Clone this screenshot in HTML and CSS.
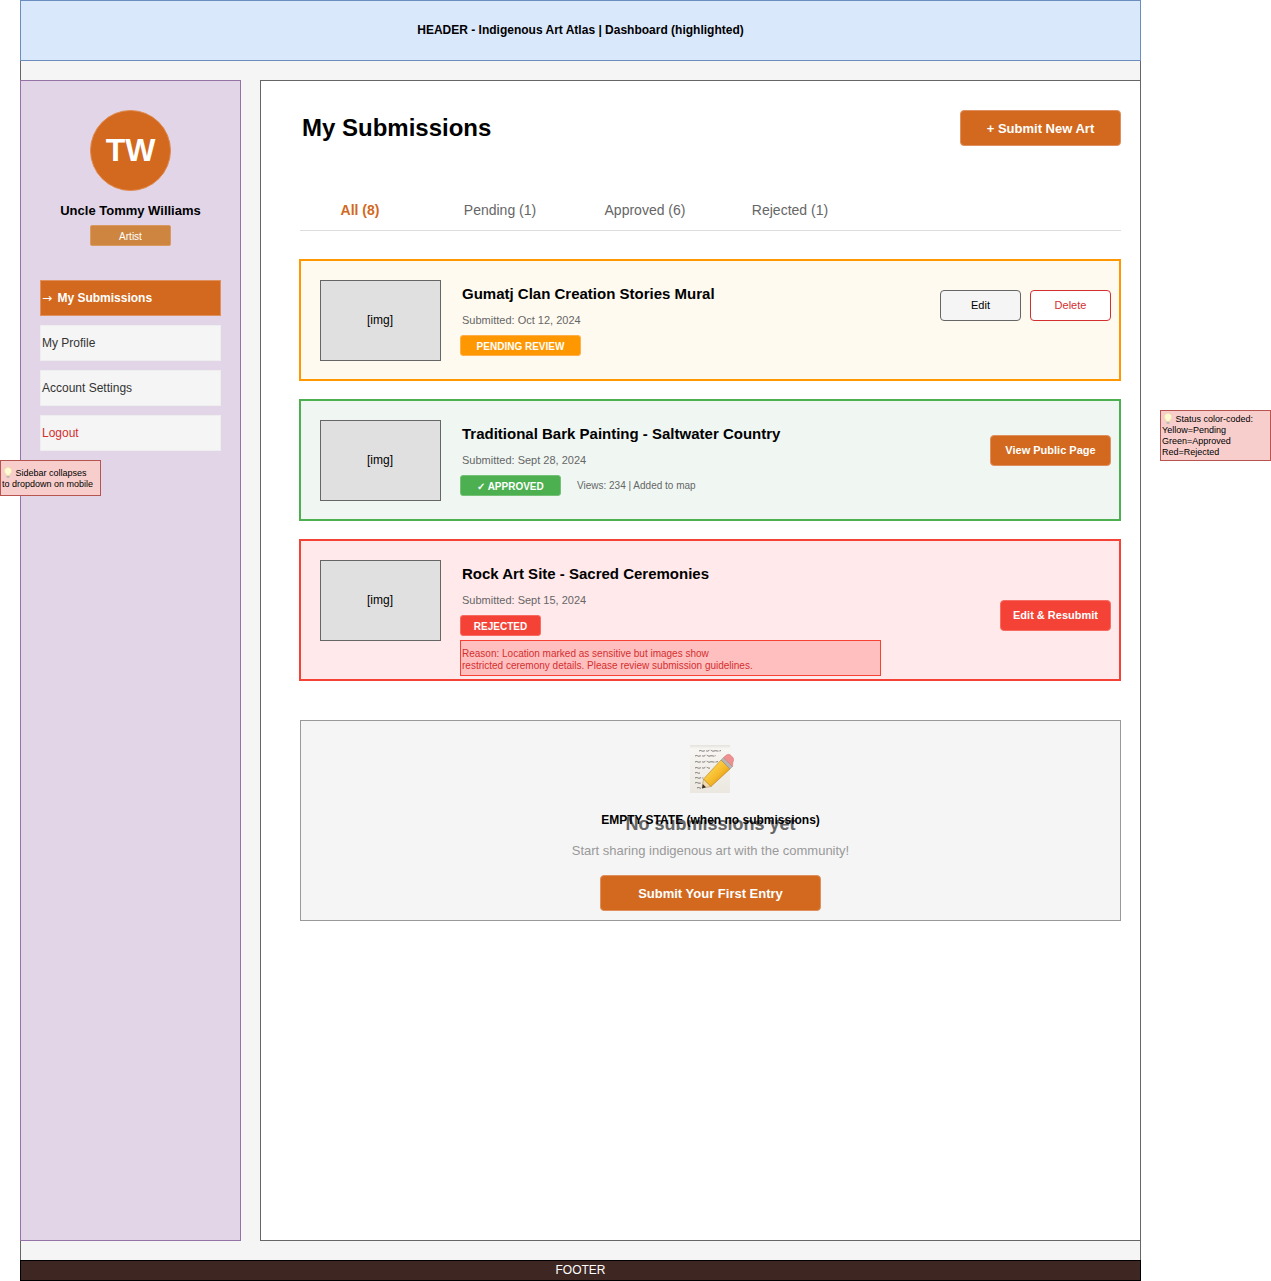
FILE: index.html
```html
<!DOCTYPE html>
<html lang="en">
<head>
    <meta charset="UTF-8">
    <meta name="viewport" content="width=device-width, initial-scale=1.0">
    <title>Indigenous Art Atlas - Dashboard</title>
    <link rel="stylesheet" href="styles.css">
</head>
<body>
    <div class="frame">
        <header class="top-header">HEADER - Indigenous Art Atlas | Dashboard (highlighted)</header>

        <div class="layout">
            <aside class="sidebar">
                <div class="avatar">TW</div>
                <div class="user-name">Uncle Tommy Williams</div>
                <div class="role-badge">Artist</div>
                <nav class="side-nav">
                    <a class="nav-item active" href="#"><span class="nav-arrow">→</span> My Submissions</a>
                    <a class="nav-item" href="#">My Profile</a>
                    <a class="nav-item" href="#">Account Settings</a>
                    <a class="nav-item logout" href="#">Logout</a>
                </nav>
            </aside>

            <main class="main-panel">
                <div class="title-row">
                    <h1>My Submissions</h1>
                    <button class="btn btn-submit">+ Submit New Art</button>
                </div>

                <div class="tabs">
                    <div class="tab tab-all">All (8)</div>
                    <div class="tab tab-pending">Pending (1)</div>
                    <div class="tab tab-approved">Approved (6)</div>
                    <div class="tab tab-rejected">Rejected (1)</div>
                </div>

                <!-- submission cards -->
                <div class="card card-pending">
                    <div class="thumb">[img]</div>
                    <div class="card-info">
                        <h2>Gumatj Clan Creation Stories Mural</h2>
                        <div class="date">Submitted: Oct 12, 2024</div>
                        <div class="status-row">
                            <span class="status status-pending">PENDING REVIEW</span>
                        </div>
                    </div>
                    <div class="actions">
                        <button class="btn btn-edit">Edit</button>
                        <button class="btn btn-delete">Delete</button>
                    </div>
                </div>

                <div class="card card-approved">
                    <div class="thumb">[img]</div>
                    <div class="card-info">
                        <h2>Traditional Bark Painting - Saltwater Country</h2>
                        <div class="date">Submitted: Sept 28, 2024</div>
                        <div class="status-row">
                            <span class="status status-approved">✓ APPROVED</span>
                            <span class="views">Views: 234 | Added to map</span>
                        </div>
                    </div>
                    <div class="actions">
                        <button class="btn btn-view">View Public Page</button>
                    </div>
                </div>

                <div class="card card-rejected">
                    <div class="thumb">[img]</div>
                    <div class="card-info">
                        <h2>Rock Art Site - Sacred Ceremonies</h2>
                        <div class="date">Submitted: Sept 15, 2024</div>
                        <div class="status-row">
                            <span class="status status-rejected">REJECTED</span>
                        </div>
                        <div class="reason">Reason: Location marked as sensitive but images show<br>restricted ceremony details. Please review submission guidelines.</div>
                    </div>
                    <div class="actions">
                        <button class="btn btn-resubmit">Edit &amp; Resubmit</button>
                    </div>
                </div>

                <div class="empty-state">
                    <svg class="memo-icon" width="44" height="48" viewBox="0 0 44 48">
                        <defs>
                            <linearGradient id="paper" x1="0" y1="0" x2="0" y2="1">
                                <stop offset="0" stop-color="#e4e1dc"/>
                                <stop offset="0.08" stop-color="#f8f6f3"/>
                                <stop offset="1" stop-color="#ebe7e0"/>
                            </linearGradient>
                            <linearGradient id="wood" x1="0" y1="0" x2="1" y2="1">
                                <stop offset="0.2" stop-color="#fcd955"/>
                                <stop offset="0.55" stop-color="#f6b92a"/>
                                <stop offset="0.85" stop-color="#d98a12"/>
                            </linearGradient>
                        </defs>
                        <rect x="0" y="0" width="40" height="48" fill="url(#paper)"/>
                        <g fill="none" stroke="#4a4743" stroke-width="0.7" stroke-dasharray="6 1.200 3.500 1.500 8 1">
                            <path d="M9 6c2-1.500 3 1 5 0s3 1 5-.5 3 1.500 5 .5 3 1 7-.5"/>
                            <path d="M5 11c2-1.500 3 1 5 0s3 1 5-.5 3 1.500 5 .5 3 1 6-.5"/>
                            <path d="M5 17c2-1.500 3 1 5 0s3 1 5-.5 3 1.500 5 .5 3 1 8-.5"/>
                            <path d="M5 23c2-1.500 3 1 5 0s3 1 5-.5 3 1.500 5 .5"/>
                            <path d="M5 28c2-1.500 3 1 5 0"/>
                            <path d="M5 33c2-1.500 3 1 5 0s2 1 3-.5"/>
                            <path d="M5 38c2-1.500 3 1 6 0"/>
                            <path d="M7 43c2-1.500 3 1 4 0"/>
                        </g>
                        <polygon points="12,43 13.500,34 21,41.500" fill="#f3d9ae" stroke="#a8803f" stroke-width="0.5"/>
                        <polygon points="12,43.500 12.800,39 16,42.300" fill="#35302b"/>
                        <polygon points="13.500,34 31,15 40,24 21,41.500" fill="url(#wood)" stroke="#a8700f" stroke-width="0.5"/>
                        <polygon points="31,15 33.500,12.500 42.500,21.500 40,24" fill="#b4b4b0" stroke="#85857f" stroke-width="0.4"/>
                        <path d="M33.500 12.500l2.500-2.200c1.500-1.300 3.500-1.300 5 .2l1.500 1.500c1.500 1.500 1.800 3.500.5 5l-.5 4.500z" fill="#ee8f90" stroke="#c96a6c" stroke-width="0.4"/>
                    </svg>
                    <div class="empty-heading">No submissions yet</div>
                    <div class="empty-label">EMPTY STATE (when no submissions)</div>
                    <div class="empty-text">Start sharing indigenous art with the community!</div>
                    <button class="btn btn-first">Submit Your First Entry</button>
                </div>
            </main>
        </div>

        <footer class="bottom-footer">FOOTER</footer>
    </div>

    <div class="note note-sidebar">
        <div><svg class="bulb" width="8" height="11" viewBox="0 0 8 11"><path d="M4 0.300a3.600 3.600 0 0 1 2 6.600L5.500 8.500h-3L2 6.900a3.600 3.600 0 0 1 2-6.600z" fill="#fffbd6" stroke="#efe39a" stroke-width="0.6"/><rect x="2.600" y="8.800" width="2.800" height="2" fill="#b9b9b3"/></svg> Sidebar collapses</div>
        <div>to dropdown on mobile</div>
    </div>
    <div class="note note-status">
        <div><svg class="bulb" width="8" height="11" viewBox="0 0 8 11"><path d="M4 0.300a3.600 3.600 0 0 1 2 6.600L5.500 8.500h-3L2 6.900a3.600 3.600 0 0 1 2-6.600z" fill="#fffbd6" stroke="#efe39a" stroke-width="0.6"/><rect x="2.600" y="8.800" width="2.800" height="2" fill="#b9b9b3"/></svg> Status color-coded:</div>
        <div>Yellow=Pending</div>
        <div>Green=Approved</div>
        <div>Red=Rejected</div>
    </div>
</body>
</html>
```

FILE: styles.css
```css
* {
    box-sizing: border-box;
}
html, body {
    margin: 0;
    padding: 0;
    background: #fff;
    overflow: hidden;
}
body {
    font-family: 'Liberation Sans', Arial, sans-serif;
    color: #000;
    height: 1281px;
    position: relative;
}
button {
    font-family: inherit;
    cursor: pointer;
}

/* outer wireframe */
.frame {
    width: 1121px;
    height: 1281px;
    margin-left: 20px;
    background: #f5f5f5;
    border-left: 1px solid #666;
    border-right: 1px solid #666;
    display: flex;
    flex-direction: column;
}
.top-header {
    height: 61px;
    margin: 0 -1px;
    padding-bottom: 2px;
    background: #dae8fc;
    border: 1px solid #6c8ebf;
    font-size: 12px;
    font-weight: bold;
    display: flex;
    align-items: center;
    justify-content: center;
}
.layout {
    display: flex;
    gap: 19px;
    margin: 19px -1px 19px -1px;
    height: 1161px;
}
.bottom-footer {
    height: 21px;
    margin: 0 -1px;
    padding-bottom: 2px;
    background: #3e2723;
    border: 1px solid #000;
    color: #fff;
    font-size: 12px;
    display: flex;
    align-items: center;
    justify-content: center;
}

/* sidebar */
.sidebar {
    width: 221px;
    flex-shrink: 0;
    background: #e1d5e7;
    border: 1px solid #9673a6;
    padding: 29px 19px 0;
    display: flex;
    flex-direction: column;
    align-items: center;
}
.avatar {
    width: 81px;
    height: 81px;
    border-radius: 50%;
    background: #d2691e;
    border: 1px solid #e08a50;
    color: #fff;
    font-size: 32px;
    font-weight: bold;
    display: flex;
    align-items: center;
    justify-content: center;
    padding-bottom: 1px;
}
.user-name {
    margin-top: 12px;
    font-size: 13px;
    font-weight: bold;
    line-height: 15px;
}
.role-badge {
    width: 81px;
    height: 21px;
    margin-top: 7px;
    padding-top: 1px;
    background: #cd853f;
    border: 1px solid #d99a62;
    border-radius: 2px;
    color: #fff;
    font-size: 10px;
    display: flex;
    align-items: center;
    justify-content: center;
}
.side-nav {
    width: 181px;
    margin-top: 34px;
    display: flex;
    flex-direction: column;
    gap: 9px;
}
.nav-item {
    height: 36px;
    padding-left: 1px;
    background: #f5f5f5;
    border: 1px solid #eee;
    color: #333;
    font-size: 12px;
    text-decoration: none;
    display: block;
    line-height: 34px;
}
.nav-item.active {
    background: #d2691e;
    border-color: #e0905f;
    color: #fff;
    font-weight: bold;
}
.nav-arrow {
    font-family: 'DejaVu Sans', sans-serif;
    font-weight: normal;
    margin-right: 2px;
}
.nav-item.logout {
    color: #d32f2f;
}

/* main */
.main-panel {
    flex: 1;
    background: #fff;
    border: 1px solid #666;
    padding: 29px 19px 0 38px;
}
.title-row {
    display: flex;
    justify-content: space-between;
    align-items: center;
    height: 36px;
}
.title-row h1 {
    margin: 0 0 0 3px;
    font-size: 24px;
    font-weight: bold;
}
.btn {
    border-radius: 4px;
    font-size: 13px;
    padding: 0;
}
.btn-submit {
    width: 161px;
    height: 36px;
    background: #d2691e;
    border: 1px solid #e0905f;
    color: #fff;
    font-weight: bold;
}

/* tabs */
.tabs {
    display: flex;
    height: 41px;
    margin: 44px 0 28px 1px;
    border-bottom: 1px solid #ddd;
    font-size: 14px;
    color: #666;
}
.tab {
    height: 40px;
    display: flex;
    align-items: center;
    justify-content: center;
}
.tab-all {
    width: 120px;
    color: #d2691e;
    font-weight: bold;
}
.tab-pending, .tab-rejected {
    width: 160px;
}
.tab-approved {
    width: 130px;
}

/* submission cards */
.card {
    height: 122px;
    margin-bottom: 18px;
    padding: 19px 8px 0 19px;
    border: 2px solid;
    display: flex;
    align-items: flex-start;
}
.card-pending {
    background: #fffaf0;
    border-color: #ff9800;
}
.card-approved {
    background: #f0f7f3;
    border-color: #4caf50;
}
.card-rejected {
    height: 142px;
    margin-bottom: 39px;
    background: #ffe9eb;
    border-color: #f44336;
}
.thumb {
    width: 121px;
    height: 81px;
    flex-shrink: 0;
    padding: 0 1px 1px 0;
    background: #e0e0e0;
    border: 1px solid #666;
    font-size: 12px;
    display: flex;
    align-items: center;
    justify-content: center;
}
.card-info {
    flex: 1;
    margin-left: 19px;
}
.card-info h2 {
    margin: 5px 0 0 2px;
    font-size: 15px;
    line-height: 18px;
    font-weight: bold;
}
.date {
    margin: 11px 0 0 2px;
    font-size: 11px;
    line-height: 13px;
    color: #666;
}
.status-row {
    margin-top: 8px;
    display: flex;
    align-items: center;
}
.status {
    height: 21px;
    padding-top: 1px;
    border-radius: 3px;
    color: #fff;
    font-size: 10px;
    font-weight: bold;
    display: flex;
    align-items: center;
    justify-content: center;
}
.status-pending {
    width: 121px;
    background: #ff9800;
    border: 1px solid #ffb04a;
}
.status-approved {
    width: 101px;
    background: #4caf50;
    border: 1px solid #74c177;
}
.status-rejected {
    width: 81px;
    background: #f44336;
    border: 1px solid #f76c62;
}
.views {
    margin-left: 16px;
    font-size: 10px;
    color: #666;
}
.reason {
    width: 421px;
    height: 36px;
    margin-top: 4px;
    padding: 7px 0 0 1px;
    background: #ffbfbf;
    border: 1px solid #f44336;
    color: #d32f2f;
    font-size: 10px;
    line-height: 12px;
}
.actions {
    display: flex;
    gap: 9px;
    margin-top: 10px;
}
.btn-edit, .btn-delete {
    width: 81px;
    height: 31px;
    padding-bottom: 2px;
    font-size: 11px;
}
.btn-edit {
    background: #f5f5f5;
    border: 1px solid #666;
    color: #000;
}
.btn-delete {
    background: #fff;
    border: 1px solid #d32f2f;
    color: #d32f2f;
}
.btn-view, .btn-resubmit {
    height: 31px;
    padding-bottom: 2px;
    color: #fff;
    font-size: 11px;
    font-weight: bold;
}
.btn-view {
    width: 121px;
    margin-top: 5px;
    background: #d2691e;
    border: 1px solid #e0905f;
}
.btn-resubmit {
    width: 111px;
    margin-top: 30px;
    background: #f44336;
    border: 1px solid #f76c62;
}

/* empty state */
.empty-state {
    height: 201px;
    margin-left: 1px;
    padding-top: 24px;
    background: #f5f5f5;
    border: 1px solid #999;
    display: flex;
    flex-direction: column;
    align-items: center;
    position: relative;
}
.memo-icon {
    margin-left: 2px;
    display: block;
}
.empty-heading {
    margin-top: 21px;
    font-size: 18px;
    line-height: 21px;
    font-weight: bold;
    color: #666;
}
/* label sits on top of the heading, same as the source wireframe */
.empty-label {
    position: absolute;
    top: 92px;
    left: 0;
    right: 0;
    text-align: center;
    font-size: 12px;
    line-height: 14px;
    font-weight: bold;
}
.empty-text {
    margin-top: 8px;
    font-size: 13px;
    line-height: 15px;
    color: #999;
}
.btn-first {
    width: 221px;
    height: 36px;
    margin-top: 17px;
    background: #d2691e;
    border: 1px solid #e0905f;
    color: #fff;
    font-weight: bold;
}

/* annotation notes */
.note {
    position: absolute;
    padding: 2px 0 0 1px;
    background: #f8cecc;
    border: 1px solid #b85450;
    font-size: 9px;
    line-height: 11px;
}
.note-sidebar {
    left: 0;
    top: 460px;
    width: 101px;
    height: 36px;
    padding-top: 6px;
}
.note-status {
    left: 1160px;
    top: 410px;
    width: 111px;
    height: 51px;
}
.bulb {
    margin: 0 1px 0 2px;
    vertical-align: -2px;
}
```
